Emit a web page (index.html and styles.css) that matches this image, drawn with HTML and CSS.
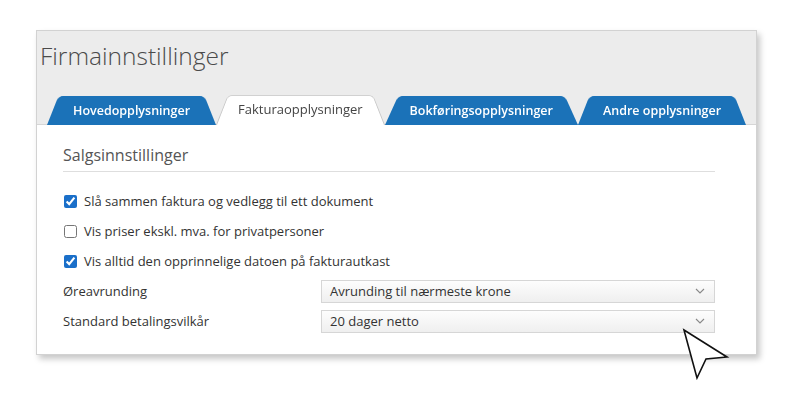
FILE: index.html
```html
<!DOCTYPE html>
<html lang="no">
<head>
    <meta charset="UTF-8">
    <title>Firmainnstillinger</title>
    <link rel="stylesheet" href="styles.css">
</head>
<body>
    <div id="panel">
        <div class="panel-head">
            <h1>Firmainnstillinger</h1>
            <div class="tabs">
                <div class="tab">Hovedopplysninger</div>
                <div class="tab active">Fakturaopplysninger</div>
                <div class="tab">Bokføringsopplysninger</div>
                <div class="tab">Andre opplysninger</div>
            </div>
        </div>
        <div class="panel-body">
            <h2>Salgsinnstillinger</h2>
            <label class="check-row"><input type="checkbox" checked> Slå sammen faktura og vedlegg til ett dokument</label>
            <label class="check-row"><input type="checkbox"> Vis priser ekskl. mva. for privatpersoner</label>
            <label class="check-row"><input type="checkbox" checked> Vis alltid den opprinnelige datoen på fakturautkast</label>
            <div class="field-row">
                <span class="field-label">Øreavrunding</span>
                <div class="select">
                    <span>Avrunding til nærmeste krone</span>
                    <svg width="10" height="6" viewBox="0 0 10 6"><path d="M1 1l4 4 4-4" fill="none" stroke="#888" stroke-width="1.1"/></svg>
                </div>
            </div>
            <div class="field-row">
                <span class="field-label">Standard betalingsvilkår</span>
                <div class="select">
                    <span>20 dager netto</span>
                    <svg width="10" height="6" viewBox="0 0 10 6"><path d="M1 1l4 4 4-4" fill="none" stroke="#888" stroke-width="1.1"/></svg>
                </div>
            </div>
        </div>
    </div>
    <svg class="cursor" width="50" height="54" viewBox="0 0 50 54">
        <path d="M3 2 L46 29 L25 31 L16 50 Z" fill="#fff" stroke="#111" stroke-width="1.6" stroke-linejoin="miter"/>
    </svg>
</body>
</html>
```

FILE: styles.css
```css
*{
    margin: 0;
    padding: 0;
    box-sizing: border-box;
}
body{
    background-color: #fff;
    font-family: "Open Sans", "Noto Sans", sans-serif;
    position: relative;
    height: 396px;
    overflow: hidden;
}
#panel{
    margin: 30px 0 0 36px;
    width: 721px;
    border: 1px solid #d2d2d2;
    background-color: #fff;
    box-shadow: 3px 4px 6px rgba(0,0,0,0.22);
}
.panel-head{
    background-color: #ececec;
    padding-top: 9px;
}
.panel-head>h1{
    font-size: 24.5px;
    font-weight: 300;
    color: #4a4a4a;
    line-height: 32px;
    padding-left: 3px;
    margin-bottom: 23px;
}
.tabs{
    display: flex;
    align-items: flex-end;
    padding-left: 10px;
    border-bottom: 1px solid #d6d6d6;
}
.tab{
    position: relative;
    z-index: 1;
    height: 29px;
    line-height: 29px;
    padding: 0 25px;
    margin-bottom: -1px;
    font-size: 12.5px;
    font-weight: 600;
    color: #fff;
    white-space: nowrap;
}
.tab:first-child{
    padding: 0 26px;
}
.tab::before{
    content: "";
    position: absolute;
    top: 0;
    left: 0;
    right: 0;
    bottom: 0;
    z-index: -1;
    background-color: #1b72b8;
    border-radius: 5px 5px 0 0;
    transform: scaleY(1.175) perspective(32px) rotateX(10deg);
    transform-origin: bottom;
}
.tab.active{
    color: #444;
    font-size: 13px;
    font-weight: 400;
    padding: 0 22px;
    height: 30px;
    z-index: 2;
}
.tab.active::before{
    background-color: #fff;
    border: 1px solid #c8c8c8;
    border-bottom: none;
}
.panel-body{
    padding: 19px 41px 18px 26px;
}
.panel-body>h2{
    font-size: 16px;
    font-weight: 400;
    color: #555;
    line-height: 22px;
    padding-bottom: 5px;
    border-bottom: 1px solid #dedede;
    margin-bottom: 14px;
}
.check-row{
    display: flex;
    align-items: center;
    height: 30px;
    font-size: 13px;
    color: #333;
}
.check-row>input{
    width: 13px;
    height: 13px;
    margin: 0 7px 0 1px;
    accent-color: #1a6fc9;
}
.field-row{
    display: flex;
    align-items: center;
    justify-content: space-between;
    height: 30px;
    font-size: 13px;
    color: #333;
}
.select{
    width: 394px;
    height: 23px;
    display: flex;
    align-items: center;
    justify-content: space-between;
    padding: 0 9px 0 8px;
    border: 1px solid #d6d6d6;
    background: linear-gradient(#fdfdfd, #efefef);
    color: #333;
}
.cursor{
    position: absolute;
    left: 681px;
    top: 328px;
}
```
